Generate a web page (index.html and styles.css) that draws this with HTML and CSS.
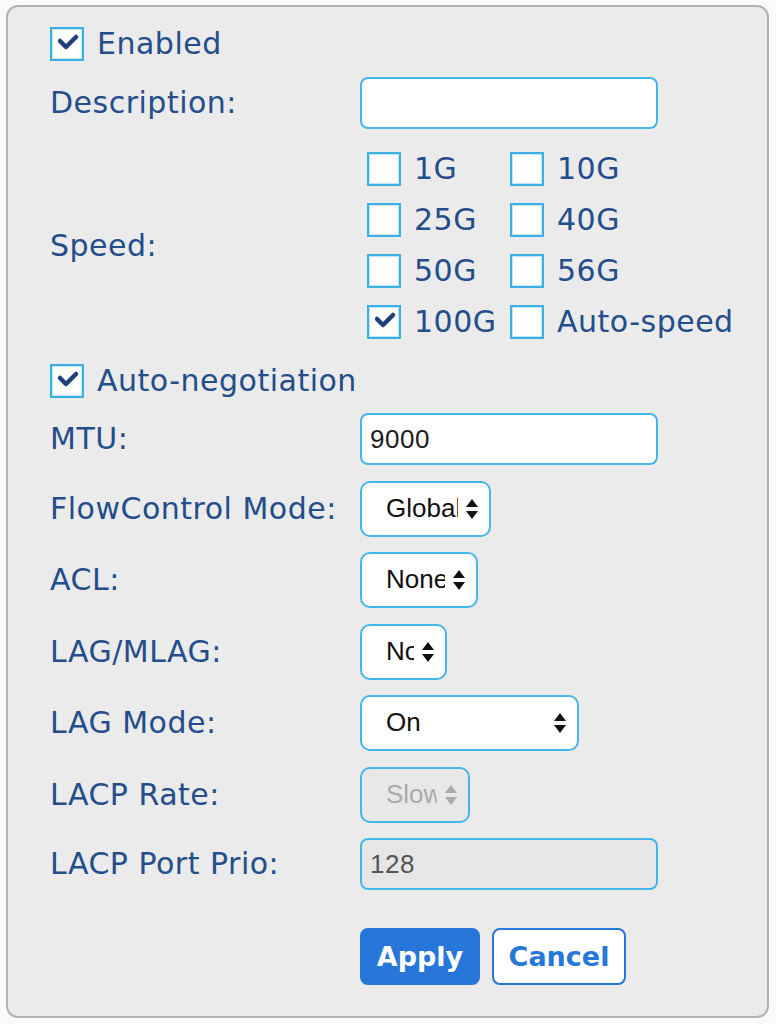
FILE: index.html
```html
<!DOCTYPE html>
<html lang="en">
<head>
  <meta charset="UTF-8">
  <meta name="viewport" content="width=device-width, initial-scale=1.0">
  <title>Port Settings</title>
  <link rel="stylesheet" href="styles.css">
</head>
<body>
  <div class="panel">
    <div class="check-row">
      <span class="box"><svg viewBox="0 0 30 30"><path d="M8 12 L14 18 L24 8" /></svg></span>
      <span class="check-text">Enabled</span>
    </div>

    <div class="row">
      <span class="label">Description:</span>
      <div class="text-input"></div>
    </div>

    <div class="row speed-row">
      <span class="label">Speed:</span>
      <div class="speed-grid">
        <div class="opt"><span class="box"></span><span>1G</span></div>
        <div class="opt"><span class="box"></span><span>10G</span></div>
        <div class="opt"><span class="box"></span><span>25G</span></div>
        <div class="opt"><span class="box"></span><span>40G</span></div>
        <div class="opt"><span class="box"></span><span>50G</span></div>
        <div class="opt"><span class="box"></span><span>56G</span></div>
        <div class="opt"><span class="box"><svg viewBox="0 0 30 30"><path d="M8 12 L14 18 L24 8" /></svg></span><span>100G</span></div>
        <div class="opt"><span class="box"></span><span>Auto-speed</span></div>
      </div>
    </div>

    <div class="check-row neg-row">
      <span class="box"><svg viewBox="0 0 30 30"><path d="M8 12 L14 18 L24 8" /></svg></span>
      <span class="check-text">Auto-negotiation</span>
    </div>

    <div class="row">
      <span class="label">MTU:</span>
      <div class="text-input"><span>9000</span></div>
    </div>

    <div class="row">
      <span class="label">FlowControl Mode:</span>
      <div class="select sel-flow">
        <span class="sel-text">Global</span>
        <svg class="arrows" viewBox="0 0 12 20"><path d="M6 0 L12 8 L0 8 Z M0 12 L12 12 L6 20 Z" /></svg>
      </div>
    </div>

    <div class="row">
      <span class="label">ACL:</span>
      <div class="select sel-acl">
        <span class="sel-text">None</span>
        <svg class="arrows" viewBox="0 0 12 20"><path d="M6 0 L12 8 L0 8 Z M0 12 L12 12 L6 20 Z" /></svg>
      </div>
    </div>

    <div class="row">
      <span class="label">LAG/MLAG:</span>
      <div class="select sel-lag">
        <span class="sel-text">None</span>
        <svg class="arrows" viewBox="0 0 12 20"><path d="M6 0 L12 8 L0 8 Z M0 12 L12 12 L6 20 Z" /></svg>
      </div>
    </div>

    <div class="row">
      <span class="label">LAG Mode:</span>
      <div class="select sel-mode">
        <span class="sel-text">On</span>
        <svg class="arrows" viewBox="0 0 12 20"><path d="M6 0 L12 8 L0 8 Z M0 12 L12 12 L6 20 Z" /></svg>
      </div>
    </div>

    <div class="row">
      <span class="label">LACP Rate:</span>
      <div class="select sel-rate disabled">
        <span class="sel-text">Slow</span>
        <svg class="arrows" viewBox="0 0 12 20"><path d="M6 0 L12 8 L0 8 Z M0 12 L12 12 L6 20 Z" /></svg>
      </div>
    </div>

    <div class="row">
      <span class="label">LACP Port Prio:</span>
      <div class="text-input disabled"><span>128</span></div>
    </div>

    <div class="row button-row">
      <span></span>
      <div class="buttons">
        <button class="btn btn-apply">Apply</button>
        <button class="btn btn-cancel">Cancel</button>
      </div>
    </div>
  </div>
</body>
</html>
```

FILE: styles.css
```css
body {
  margin: 0;
  padding: 5px 7px 0 6px;
  background: #fafafa;
  font-family: "DejaVu Sans", Verdana, sans-serif;
}

.panel {
  box-sizing: border-box;
  height: 1013px;
  background: #ebebeb;
  border: 2px solid #b2b2b2;
  border-radius: 12px;
  padding: 20px 30px 0 42px;
  display: flex;
  flex-direction: column;
  gap: 15.5px;
  color: #244d8c;
  font-size: 30px;
  letter-spacing: 0.5px;
}

.row {
  display: grid;
  grid-template-columns: 310px 1fr;
  align-items: center;
}

.label {
  line-height: 1;
}

.check-row {
  display: flex;
  align-items: center;
  gap: 13px;
  height: 34px;
}

.check-text {
  line-height: 1;
}

.box {
  box-sizing: border-box;
  width: 34px;
  height: 34px;
  flex: none;
  background: #fff;
  border: 2px solid #3cb0e4;
  box-shadow: inset 0 0 0 1px #bfe5f6;
  display: flex;
}

.box svg {
  width: 30px;
  height: 30px;
}

.box path {
  fill: none;
  stroke: #1d3f7c;
  stroke-width: 4.5;
  stroke-linecap: round;
  stroke-linejoin: round;
}

.speed-row {
  margin-top: 8px;
}

.speed-grid {
  display: grid;
  grid-template-columns: 143px auto;
  row-gap: 17px;
  padding-left: 7px;
}

.opt {
  display: flex;
  align-items: center;
  gap: 13px;
  line-height: 1;
}

.neg-row {
  margin-top: 9px;
}

.text-input {
  box-sizing: border-box;
  width: 298px;
  height: 52px;
  background: #fff;
  border: 2px solid #46b6ea;
  border-radius: 8px;
  display: flex;
  align-items: center;
  padding-left: 8px;
  font-family: "Liberation Sans", Arial, sans-serif;
  font-size: 26px;
  letter-spacing: 0.5px;
  color: #1c1c1c;
}

.text-input.disabled {
  background: #e6e6e6;
  color: #555;
}

.select {
  box-sizing: border-box;
  height: 56px;
  background: #fff;
  border: 2px solid #46b6ea;
  border-radius: 10px;
  display: flex;
  align-items: center;
  padding: 0 11px 0 24px;
  font-family: "Liberation Sans", Arial, sans-serif;
  font-size: 26px;
  letter-spacing: 0;
  color: #111;
}

.sel-text {
  flex: 1;
  overflow: hidden;
  white-space: nowrap;
  line-height: 1.2;
}

.arrows {
  width: 12px;
  height: 20px;
  margin-left: 8px;
  flex: none;
  fill: #111;
}

.sel-flow { width: 131px; }
.sel-acl { width: 118px; }
.sel-lag { width: 87px; }
.sel-mode { width: 219px; }
.sel-rate { width: 110px; }

.select.disabled {
  background: #e8e8e8;
  color: #aaa;
}

.select.disabled .arrows {
  fill: #aaa;
}

.button-row {
  margin-top: 22px;
}

.buttons {
  display: flex;
  gap: 12px;
}

.btn {
  box-sizing: border-box;
  height: 57px;
  border-radius: 8px;
  font-family: "DejaVu Sans", Verdana, sans-serif;
  font-weight: bold;
  font-size: 27px;
  letter-spacing: 0;
  border: 2px solid #2677d9;
  padding: 0;
}

.btn-apply {
  width: 120px;
  background: #2677d9;
  color: #fff;
}

.btn-cancel {
  width: 134px;
  background: #fff;
  color: #2677d9;
}
```
